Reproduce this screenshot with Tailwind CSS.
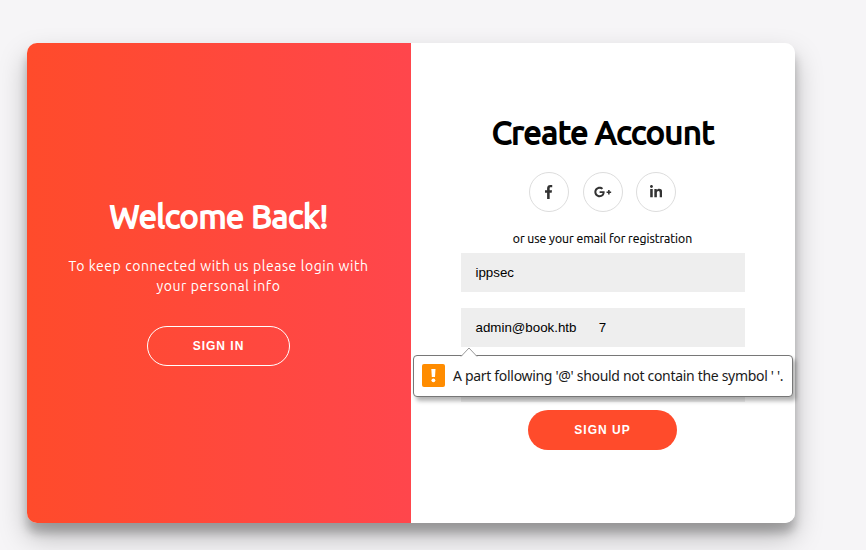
<!DOCTYPE html>
<html lang="en">
<head>
<meta charset="utf-8">
<title>Create Account</title>
<script src="https://cdn.jsdelivr.net/npm/@tailwindcss/browser@4"></script>
</head>
<body class="h-[550px] overflow-hidden bg-[#f6f5f7] pt-[43px] pl-[27px] font-['Ubuntu','Noto_Sans',sans-serif]">
<main class="relative flex h-[480px] w-[768px] rounded-[10px] shadow-[0_14px_28px_rgba(0,0,0,0.25),0_10px_10px_rgba(0,0,0,0.22)]">
  <section class="flex w-1/2 flex-col items-center rounded-l-[10px] bg-linear-to-r/srgb from-[#ff4b2b] to-[#ff464c] pt-[149px] pr-px text-center text-white">
    <h1 class="ml-px h-12 whitespace-nowrap text-[32px] leading-12 tracking-[0.05px] [-webkit-text-stroke:1.9px_white]">Welcome Back!</h1>
    <p class="mt-4 whitespace-nowrap text-[14px] leading-5 tracking-[0.56px]">To keep connected with us please login with<br>your personal info</p>
    <button class="mt-[30px] h-10 w-[143px] rounded-full border border-white font-['Liberation_Sans',sans-serif] text-[12px] font-bold tracking-[1px]">SIGN IN</button>
  </section>
  <section class="flex w-1/2 flex-col items-center rounded-r-[10px] bg-white pt-[65px] text-black">
    <h1 class="h-12 whitespace-nowrap text-[32px] leading-12 tracking-[0.05px] [-webkit-text-stroke:1.9px_black]">Create Account</h1>
    <div class="mt-4 mr-px flex w-[147px] justify-between text-[#333]">
      <a class="flex size-10 items-center justify-center rounded-full border border-[#ddd]"><svg class="h-[14px]" viewBox="0 0 264 512" fill="currentColor"><path d="M215.8 85H264V3.6C255.7 2.5 227.1 0 193.8 0 124.3 0 76.7 42.4 76.7 120.3V192H0v91h76.7v229h94V283h73.6l11.7-91h-85.3v-62.7c0-26.3 7.3-44.3 45.1-44.3z"/></svg></a>
      <a class="ml-px flex size-10 items-center justify-center rounded-full border border-[#ddd]"><svg class="h-[14px]" viewBox="0 0 640 512" fill="currentColor"><path d="M386.061 228.496c1.834 9.692 3.143 19.384 3.143 31.956C389.204 370.205 315.599 448 204.8 448c-106.084 0-192-85.915-192-192s85.916-192 192-192c51.864 0 95.083 18.859 128.611 50.292l-52.126 50.03c-14.145-13.621-39.028-29.599-76.485-29.599-65.484 0-118.92 54.221-118.92 121.277 0 67.056 53.436 121.277 118.92 121.277 75.961 0 104.513-54.745 108.965-82.773H204.8v-66.009h181.261zm185.406 6.437V179.2h-56.001v55.733h-55.733v56.001h55.733v55.733h56.001v-55.733H627.2v-56.001h-55.733z"/></svg></a>
      <a class="flex size-10 items-center justify-center rounded-full border border-[#ddd]"><svg class="h-[14px]" viewBox="0 0 448 512" fill="currentColor"><path d="M100.3 448H7.4V148.9h92.9V448zM53.8 108.1C24.1 108.1 0 83.5 0 53.8S24.1 0 53.8 0s53.8 24.1 53.8 53.8-24.1 54.3-53.8 54.3zM448 448h-92.7V302.4c0-34.7-.7-79.2-48.3-79.2-48.3 0-55.7 37.7-55.7 76.7V448h-92.8V148.9h89.1v40.8h1.3c12.4-23.5 42.7-48.3 87.9-48.3 94 0 111.3 61.9 111.3 142.3V448z"/></svg></a>
    </div>
    <span class="mt-[19px] mr-px h-4 whitespace-nowrap text-[12.2px] leading-4 [-webkit-text-stroke:0.15px_black]">or use your email for registration</span>
    <div class="mt-1.5 flex w-[284px] flex-col gap-4 font-['Liberation_Sans',sans-serif] text-[13.333px]">
      <div class="flex h-[39px] items-center bg-[#eee] px-[14.5px]">ippsec</div>
      <div class="flex h-[39px] items-center whitespace-pre bg-[#eee] px-[14.5px]">admin@book.htb      7</div>
      <div class="h-[39px] bg-[#eee]"></div>
    </div>
    <button class="mt-2 mr-px h-10 w-[149px] rounded-full bg-[#ff4b2b] font-['Liberation_Sans',sans-serif] text-[12px] font-bold tracking-[1px] text-white">SIGN UP</button>
  </section>
  <div class="absolute top-[312px] left-[386px] flex h-[42px] w-[380px] items-center rounded-[4px] border border-[#777] bg-white pl-2 text-[#1a1a1a] shadow-[3px_4px_4px_rgba(0,0,0,0.3)]">
    <svg class="absolute -top-[9px] left-[46px]" width="18" height="10" viewBox="0 0 18 10"><path d="M1 9.5 9 1l8 8.5" fill="#fff" stroke="#999"/><path d="M2 9.5h14" stroke="#fff"/></svg>
    <svg class="-mt-px shrink-0" width="23" height="23" viewBox="0 0 23 23"><rect width="23" height="23" rx="2" fill="#ff8c00"/><path d="M9.3 5h4.2l-.5 8h-3.2z" fill="#fff"/><circle cx="11.4" cy="16.3" r="1.9" fill="#fff"/></svg>
    <span class="ml-2 whitespace-nowrap font-['Noto_Sans',sans-serif] text-[14px] leading-5 tracking-[-0.31px]">A part following '@' should not contain the symbol ' '.</span>
  </div>
</main>
</body>
</html>
